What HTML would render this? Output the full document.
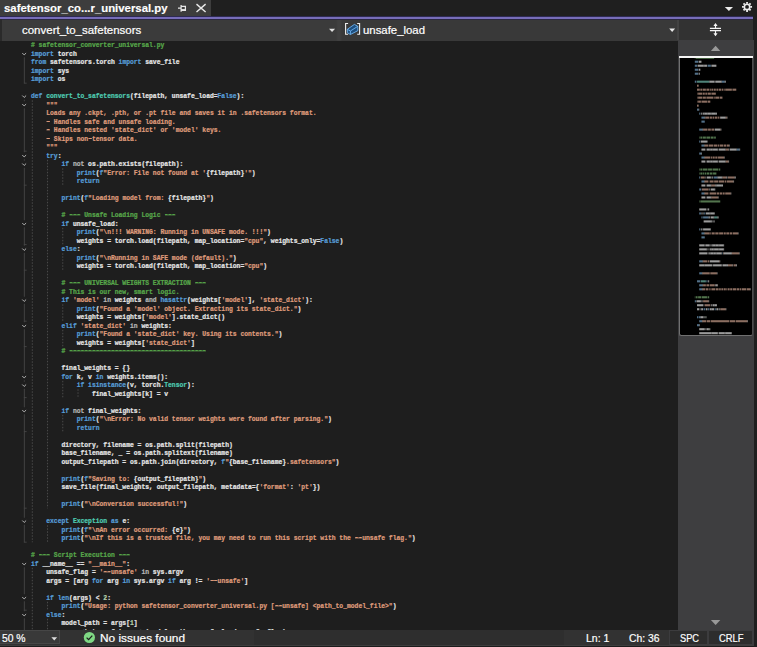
<!DOCTYPE html>
<html lang="en">
<head>
<meta charset="utf-8">
<title>safetensor_converter_universal.py</title>
<style>
html,body{margin:0;padding:0;}
body{width:757px;height:647px;overflow:hidden;background:#1e1e1e;position:relative;font-family:"Liberation Sans",sans-serif;color:#fff;}
.abs{position:absolute;}
.tx{line-height:20px;height:20px;white-space:nowrap;transform-origin:0 0;-webkit-text-stroke:0.2px currentColor;}
#tabs{left:0;top:0;width:757px;height:17px;background:#1f1f1f;}
#tab{left:0;top:0;width:211px;height:17px;background:#3d3d3d;}
#accent{left:0;top:16px;width:753.4px;height:4px;background:linear-gradient(#2e2a52 0,#2e2a52 0.7px,#776db9 0.7px,#776db9 3.1px,#2b2840 3.1px,#2b2840 4px);}
#nav{left:0;top:19.8px;width:753.4px;height:20.9px;background:linear-gradient(90deg,#3b3b3b 0,#3b3b3b 336px,#404040 338px,#404040 340px,#393939 342px,#393939 100%);}
#codeclip{left:0;top:40.8px;width:678px;height:588.9px;overflow:hidden;}
#code{left:31.0px;top:0.00px;font-family:"Liberation Mono",monospace;font-size:12.7px;line-height:17.0px;color:#e4e4e4;white-space:pre;font-weight:bold;-webkit-text-stroke:0.45px currentColor;transform:scale(0.5);transform-origin:0 0;}
.ln{height:17.0px;}
.h{position:relative;top:-1.8px;background:linear-gradient(currentColor,currentColor) no-repeat center 7.3px/calc(100% - 1.2px) 1.7px;}
.c{color:#57a64a;} .k{color:#569cd6;} .s{color:#de9a7a;} .f{color:#4ec9b0;} .t{color:#4ec9b0;} .o{color:#b4b4b4;} .n{color:#b5cea8;}
#editor{left:0;top:40.8px;width:678px;height:589px;overflow:hidden;background:#1e1e1e;}
#vscroll{left:678px;top:39.8px;width:75.8px;height:590.1px;background:#3e3e40;}
#split{left:678.6px;top:19.8px;width:74.8px;height:20px;background:#323232;}
#mini{left:678.5px;top:56.2px;width:74.3px;height:280.2px;background:#000;border-radius:0 0 2.5px 2.5px;border:0.9px solid #707070;border-right:1.4px solid #4c4c4c;border-top:none;box-sizing:border-box;}
#status{left:0;top:629.8px;width:757px;height:17.2px;background:linear-gradient(#323232 0,#323232 15.2px,#3d3d3d 15.2px,#3d3d3d 16.2px,#1c1c1c 16.2px);}
#zoombox{left:0;top:630.3px;width:59.6px;height:14.2px;background:#393939;border:0.8px solid #464646;border-left:none;box-sizing:border-box;}
.box{top:630.9px;height:13.1px;background:#2d2d2d;}
</style>
</head>
<body>
<div id="tabs" class="abs"></div>
<div id="tab" class="abs"></div>
<div class="abs tx" style="left:4.0px;top:-2.02px;font-size:11.3px;font-weight:bold;color:#ffffff;transform:scaleX(1.0055);-webkit-text-stroke:0.15px #fff;">safetensor_co...r_universal.py</div>
<svg class="abs" style="left:170px;top:0" width="50" height="17" viewBox="0 0 50 17">
  <g fill="none" stroke="#e8e8e8" stroke-width="1">
    <path d="M8 8.2 H11 M11.1 5 V11.8 M11 6.3 H15.4 V10.4 H11" stroke-width="1.25"/>
    <path d="M11 10 H15.4" stroke-width="1.8"/>
    <path d="M26.5 4.1 L35.6 12 M35.6 4.1 L26.5 12" stroke-width="1.4"/>
  </g>
</svg>
<svg class="abs" style="left:720px;top:0" width="37" height="17" viewBox="0 0 37 17">
  <path d="M4.8 7 H13 L8.9 11.1 Z" fill="#ececec"/>
  <g transform="translate(27.05 6.9)">
    <circle r="2.7" fill="none" stroke="#ececec" stroke-width="1.6"/>
    <g stroke="#ececec" stroke-width="1.8">
      <path d="M0 -5V-3.2M0 5V3.2M-5 0H-3.2M5 0H3.2M-3.55 -3.55L-2.3 -2.3M3.55 3.55L2.3 2.3M-3.55 3.55L-2.3 2.3M3.55 -3.55L2.3 -2.3"/>
    </g>
  </g>
</svg>
<div id="accent" class="abs"></div>
<div id="nav" class="abs"></div>
<div class="abs" style="left:0;top:19.4px;width:1.5px;height:21.4px;background:#2a2a2a"></div>
<div class="abs" style="left:677.2px;top:19.8px;width:1.6px;height:20.6px;background:#424242"></div>
<div class="abs tx" style="left:21.6px;top:19.85px;font-size:11.4px;font-weight:normal;color:#ffffff;transform:scaleX(1.0076);">convert_to_safetensors</div>
<div class="abs tx" style="left:362.9px;top:19.9px;font-size:11.4px;font-weight:normal;color:#ffffff;transform:scaleX(0.9984);">unsafe_load</div>
<svg class="abs" style="left:326px;top:19.4px" width="12" height="21" viewBox="0 0 12 21"><path d="M3 9.8 H9.1 L6.05 13 Z" fill="#e0e0e0"/></svg>
<svg class="abs" style="left:665px;top:19.4px" width="12" height="21" viewBox="0 0 12 21"><path d="M4.2 9.6 H10.1 L7.15 12.9 Z" fill="#e8e8e8"/></svg>
<svg class="abs" style="left:340px;top:19px" width="26" height="22" viewBox="340 19 26 22">
  <g fill="none" stroke="#f0f0f0" stroke-width="1.1"><path d="M348.1 23.5 H345.6 V34.3 H348.1"/><path d="M357.2 23.5 H359.6 V34.3 H357.2"/></g>
  <path d="M347.3 29.3 L354.4 24.4 L357.8 26.3 V30.7 L350.4 34.5 L347.4 32.7 Z" fill="#1d4f80"/>
  <g fill="none" stroke="#6db3f0" stroke-width="0.9" stroke-linejoin="round"><path d="M347.3 29.3 L354.4 24.4 L357.8 26.3 V30.7 L350.4 34.5 L347.4 32.7 Z"/><path d="M347.3 29.3 L350.4 31 L357.8 26.3 M350.4 31 V34.5"/></g>
</svg>
<div id="split" class="abs"></div>
<svg class="abs" style="left:705px;top:19px" width="22" height="22" viewBox="705 19 22 22">
  <g fill="none" stroke="#f4f4f4" stroke-width="1.15"><path d="M709.9 28.35 H721 M709.9 30.6 H721 M715.5 24 V28 M715.5 31 V35.3"/></g>
  <path d="M713.4 26 L715.5 23.1 L717.6 26 Z M713.4 33.3 L715.5 36.2 L717.6 33.3 Z" fill="#f4f4f4"/>
</svg>

<div id="editor" class="abs"></div>
<svg class="abs" style="left:0;top:0" width="678" height="630" viewBox="0 0 678 630">
<rect x="23.85" y="53.55" width="0.9" height="29.75" fill="#474747"/>
<rect x="23.85" y="96.05" width="0.9" height="446.25" fill="#474747"/>
<rect x="23.85" y="563.55" width="0.9" height="80.75" fill="#474747"/>
<rect x="23.85" y="82.70" width="2.8" height="0.9" fill="#474747"/>
<rect x="23.85" y="150.70" width="2.8" height="0.9" fill="#474747"/>
<rect x="23.85" y="184.70" width="2.8" height="0.9" fill="#474747"/>
<rect x="23.85" y="244.20" width="2.8" height="0.9" fill="#474747"/>
<rect x="23.85" y="269.70" width="2.8" height="0.9" fill="#474747"/>
<rect x="23.85" y="320.70" width="2.8" height="0.9" fill="#474747"/>
<rect x="23.85" y="346.20" width="2.8" height="0.9" fill="#474747"/>
<rect x="23.85" y="397.20" width="2.8" height="0.9" fill="#474747"/>
<rect x="23.85" y="431.20" width="2.8" height="0.9" fill="#474747"/>
<rect x="23.85" y="507.70" width="2.8" height="0.9" fill="#474747"/>
<rect x="23.85" y="541.70" width="2.8" height="0.9" fill="#474747"/>
<rect x="23.85" y="609.70" width="2.8" height="0.9" fill="#474747"/>
<rect x="20.70" y="50.25" width="7" height="7" fill="#1e1e1e"/>
<path d="M22.30 53.05 L24.20 54.95 L26.10 53.05" fill="none" stroke="#c4c4c4" stroke-width="0.9"/>
<rect x="20.70" y="92.75" width="7" height="7" fill="#1e1e1e"/>
<path d="M22.30 95.55 L24.20 97.45 L26.10 95.55" fill="none" stroke="#c4c4c4" stroke-width="0.9"/>
<rect x="20.70" y="101.25" width="7" height="7" fill="#1e1e1e"/>
<path d="M22.30 104.05 L24.20 105.95 L26.10 104.05" fill="none" stroke="#c4c4c4" stroke-width="0.9"/>
<rect x="20.70" y="152.25" width="7" height="7" fill="#1e1e1e"/>
<path d="M22.30 155.05 L24.20 156.95 L26.10 155.05" fill="none" stroke="#c4c4c4" stroke-width="0.9"/>
<rect x="20.70" y="160.75" width="7" height="7" fill="#1e1e1e"/>
<path d="M22.30 163.55 L24.20 165.45 L26.10 163.55" fill="none" stroke="#c4c4c4" stroke-width="0.9"/>
<rect x="20.70" y="220.25" width="7" height="7" fill="#1e1e1e"/>
<path d="M22.30 223.05 L24.20 224.95 L26.10 223.05" fill="none" stroke="#c4c4c4" stroke-width="0.9"/>
<rect x="20.70" y="245.75" width="7" height="7" fill="#1e1e1e"/>
<path d="M22.30 248.55 L24.20 250.45 L26.10 248.55" fill="none" stroke="#c4c4c4" stroke-width="0.9"/>
<rect x="20.70" y="296.75" width="7" height="7" fill="#1e1e1e"/>
<path d="M22.30 299.55 L24.20 301.45 L26.10 299.55" fill="none" stroke="#c4c4c4" stroke-width="0.9"/>
<rect x="20.70" y="322.25" width="7" height="7" fill="#1e1e1e"/>
<path d="M22.30 325.05 L24.20 326.95 L26.10 325.05" fill="none" stroke="#c4c4c4" stroke-width="0.9"/>
<rect x="20.70" y="373.25" width="7" height="7" fill="#1e1e1e"/>
<path d="M22.30 376.05 L24.20 377.95 L26.10 376.05" fill="none" stroke="#c4c4c4" stroke-width="0.9"/>
<rect x="20.70" y="381.75" width="7" height="7" fill="#1e1e1e"/>
<path d="M22.30 384.55 L24.20 386.45 L26.10 384.55" fill="none" stroke="#c4c4c4" stroke-width="0.9"/>
<rect x="20.70" y="407.25" width="7" height="7" fill="#1e1e1e"/>
<path d="M22.30 410.05 L24.20 411.95 L26.10 410.05" fill="none" stroke="#c4c4c4" stroke-width="0.9"/>
<rect x="20.70" y="517.75" width="7" height="7" fill="#1e1e1e"/>
<path d="M22.30 520.55 L24.20 522.45 L26.10 520.55" fill="none" stroke="#c4c4c4" stroke-width="0.9"/>
<rect x="20.70" y="560.25" width="7" height="7" fill="#1e1e1e"/>
<path d="M22.30 563.05 L24.20 564.95 L26.10 563.05" fill="none" stroke="#c4c4c4" stroke-width="0.9"/>
<rect x="20.70" y="594.25" width="7" height="7" fill="#1e1e1e"/>
<path d="M22.30 597.05 L24.20 598.95 L26.10 597.05" fill="none" stroke="#c4c4c4" stroke-width="0.9"/>
<rect x="20.70" y="611.25" width="7" height="7" fill="#1e1e1e"/>
<path d="M22.30 614.05 L24.20 615.95 L26.10 614.05" fill="none" stroke="#c4c4c4" stroke-width="0.9"/>
<line x1="32.30" y1="100.30" x2="32.30" y2="542.30" stroke="#4a4a4a" stroke-width="1" stroke-dasharray="1.5 1.5"/>
<line x1="47.54" y1="159.80" x2="47.54" y2="508.30" stroke="#4a4a4a" stroke-width="1" stroke-dasharray="1.5 1.5"/>
<line x1="62.78" y1="168.30" x2="62.78" y2="185.30" stroke="#4a4a4a" stroke-width="1" stroke-dasharray="1.5 1.5"/>
<line x1="62.78" y1="227.80" x2="62.78" y2="244.80" stroke="#4a4a4a" stroke-width="1" stroke-dasharray="1.5 1.5"/>
<line x1="62.78" y1="253.30" x2="62.78" y2="270.30" stroke="#4a4a4a" stroke-width="1" stroke-dasharray="1.5 1.5"/>
<line x1="62.78" y1="304.30" x2="62.78" y2="321.30" stroke="#4a4a4a" stroke-width="1" stroke-dasharray="1.5 1.5"/>
<line x1="62.78" y1="329.80" x2="62.78" y2="346.80" stroke="#4a4a4a" stroke-width="1" stroke-dasharray="1.5 1.5"/>
<line x1="62.78" y1="380.80" x2="62.78" y2="397.80" stroke="#4a4a4a" stroke-width="1" stroke-dasharray="1.5 1.5"/>
<line x1="78.02" y1="389.30" x2="78.02" y2="397.80" stroke="#4a4a4a" stroke-width="1" stroke-dasharray="1.5 1.5"/>
<line x1="62.78" y1="414.80" x2="62.78" y2="431.80" stroke="#4a4a4a" stroke-width="1" stroke-dasharray="1.5 1.5"/>
<line x1="47.54" y1="525.30" x2="47.54" y2="542.30" stroke="#4a4a4a" stroke-width="1" stroke-dasharray="1.5 1.5"/>
<line x1="32.30" y1="567.80" x2="32.30" y2="644.30" stroke="#4a4a4a" stroke-width="1" stroke-dasharray="1.5 1.5"/>
<line x1="47.54" y1="601.80" x2="47.54" y2="610.30" stroke="#4a4a4a" stroke-width="1" stroke-dasharray="1.5 1.5"/>
<line x1="47.54" y1="618.80" x2="47.54" y2="644.30" stroke="#4a4a4a" stroke-width="1" stroke-dasharray="1.5 1.5"/>
</svg>
<div id="codeclip" class="abs"><div id="code" class="abs"><div class="ln"><span class="c"># safetensor_converter_universal.py</span></div><div class="ln"><span class="k">import </span>torch</div><div class="ln"><span class="k">from </span>safetensors.torch <span class="k">import </span>save_file</div><div class="ln"><span class="k">import </span>sys</div><div class="ln"><span class="k">import </span>os</div><div class="ln"> </div><div class="ln"><span class="k">def </span><span class="f">convert_to_safetensors</span>(filepath, unsafe_load=<span class="k">False</span>):</div><div class="ln"><span class="s">    """</span></div><div class="ln"><span class="s">    Loads any .ckpt, .pth, or .pt file and saves it in .safetensors format.</span></div><div class="ln"><span class="s">    <span class="h">-</span> Handles safe and unsafe loading.</span></div><div class="ln"><span class="s">    <span class="h">-</span> Handles nested 'state_dict' or 'model' keys.</span></div><div class="ln"><span class="s">    <span class="h">-</span> Skips non<span class="h">-</span>tensor data.</span></div><div class="ln"><span class="s">    """</span></div><div class="ln"><span class="k">    try</span>:</div><div class="ln"><span class="k">        if </span><span class="o">not </span>os.path.exists(filepath):</div><div class="ln"><span class="k">            print</span>(<span class="k">f</span><span class="s">"Error: File not found at '</span>{filepath}<span class="s">'"</span>)</div><div class="ln"><span class="k">            return</span></div><div class="ln"> </div><div class="ln"><span class="k">        print</span>(<span class="k">f</span><span class="s">"Loading model from: </span>{filepath}<span class="s">"</span>)</div><div class="ln"> </div><div class="ln"><span class="c">        # <span class="h">---</span> Unsafe Loading Logic <span class="h">---</span></span></div><div class="ln"><span class="k">        if </span>unsafe_load:</div><div class="ln"><span class="k">            print</span>(<span class="s">"\n!!! WARNING: Running in UNSAFE mode. !!!"</span>)</div><div class="ln">            weights = torch.load(filepath, map_location=<span class="s">"cpu"</span>, weights_only=<span class="k">False</span>)</div><div class="ln"><span class="k">        else</span>:</div><div class="ln"><span class="k">            print</span>(<span class="s">"\nRunning in SAFE mode (default)."</span>)</div><div class="ln">            weights = torch.load(filepath, map_location=<span class="s">"cpu"</span>)</div><div class="ln"> </div><div class="ln"><span class="c">        # <span class="h">---</span> UNIVERSAL WEIGHTS EXTRACTION <span class="h">---</span></span></div><div class="ln"><span class="c">        # This is our new, smart logic.</span></div><div class="ln"><span class="k">        if </span><span class="s">'model' </span><span class="o">in </span>weights <span class="o">and </span><span class="k">hasattr</span>(weights[<span class="s">'model'</span>], <span class="s">'state_dict'</span>):</div><div class="ln"><span class="k">            print</span>(<span class="s">"Found a 'model' object. Extracting its state_dict."</span>)</div><div class="ln">            weights = weights[<span class="s">'model'</span>].state_dict()</div><div class="ln"><span class="k">        elif </span><span class="s">'state_dict' </span><span class="o">in </span>weights:</div><div class="ln"><span class="k">            print</span>(<span class="s">"Found a 'state_dict' key. Using its contents."</span>)</div><div class="ln">            weights = weights[<span class="s">'state_dict'</span>]</div><div class="ln"><span class="c">        # <span class="h">------------------------------------</span></span></div><div class="ln"> </div><div class="ln">        final_weights = {}</div><div class="ln"><span class="k">        for </span>k, v <span class="k">in </span>weights.items():</div><div class="ln"><span class="k">            if isinstance</span>(v, torch.<span class="t">Tensor</span>):</div><div class="ln">                final_weights[k] = v</div><div class="ln"> </div><div class="ln"><span class="k">        if </span><span class="o">not </span>final_weights:</div><div class="ln"><span class="k">            print</span>(<span class="s">"\nError: No valid tensor weights were found after parsing."</span>)</div><div class="ln"><span class="k">            return</span></div><div class="ln"> </div><div class="ln">        directory, filename = os.path.split(filepath)</div><div class="ln">        base_filename, _ = os.path.splitext(filename)</div><div class="ln">        output_filepath = os.path.join(directory, <span class="k">f</span><span class="s">"</span>{base_filename}<span class="s">.safetensors"</span>)</div><div class="ln"> </div><div class="ln"><span class="k">        print</span>(<span class="k">f</span><span class="s">"Saving to: </span>{output_filepath}<span class="s">"</span>)</div><div class="ln">        save_file(final_weights, output_filepath, metadata={<span class="s">'format'</span>: <span class="s">'pt'</span>})</div><div class="ln"> </div><div class="ln"><span class="k">        print</span>(<span class="s">"\nConversion successful!"</span>)</div><div class="ln"> </div><div class="ln"><span class="k">    except </span><span class="t">Exception </span><span class="k">as </span>e:</div><div class="ln"><span class="k">        print</span>(<span class="k">f</span><span class="s">"\nAn error occurred: </span>{e}<span class="s">"</span>)</div><div class="ln"><span class="k">        print</span>(<span class="s">"\nIf this is a trusted file, you may need to run this script with the <span class="h">--</span>unsafe flag."</span>)</div><div class="ln"> </div><div class="ln"><span class="c"># <span class="h">---</span> Script Execution <span class="h">---</span></span></div><div class="ln"><span class="k">if </span>__name__ == <span class="s">"__main__"</span>:</div><div class="ln">    unsafe_flag = <span class="s">'<span class="h">--</span>unsafe' </span><span class="o">in </span>sys.argv</div><div class="ln">    args = [arg <span class="k">for </span>arg <span class="k">in </span>sys.argv <span class="k">if </span>arg != <span class="s">'<span class="h">--</span>unsafe'</span>]</div><div class="ln"> </div><div class="ln"><span class="k">    if len</span>(args) &lt; <span class="n">2</span>:</div><div class="ln"><span class="k">        print</span>(<span class="s">"Usage: python safetensor_converter_universal.py [<span class="h">--</span>unsafe] &lt;path_to_model_file&gt;"</span>)</div><div class="ln"><span class="k">    else</span>:</div><div class="ln">        model_path = args[<span class="n">1</span>]</div><div class="ln">        convert_to_safetensors(model_path, unsafe_load=unsafe_flag)</div></div></div>

<div id="vscroll" class="abs"></div>
<svg class="abs" style="left:678px;top:40px" width="76" height="590" viewBox="0 0 76 590">
  <path d="M32.9 11 L37.6 5.7 L42.3 11 Z" fill="#999"/>
  <path d="M32.9 580 L37.6 585.1 L42.3 580 Z" fill="#999"/>
</svg>
<div id="mini" class="abs"></div>
<svg class="abs" style="left:0;top:0" width="757" height="647" viewBox="0 0 757 647">
<rect x="694.80" y="56.70" width="0.55" height="2.1" fill="#89c180" opacity="0.6"/>
<rect x="695.91" y="56.70" width="18.25" height="2.1" fill="#89c180" opacity="0.6"/>
<rect x="694.80" y="60.69" width="3.32" height="2.1" fill="#89bae2" opacity="0.6"/>
<rect x="698.67" y="60.69" width="2.77" height="2.1" fill="#ececec" opacity="0.66"/>
<rect x="694.80" y="64.68" width="2.21" height="2.1" fill="#89bae2" opacity="0.6"/>
<rect x="697.56" y="64.68" width="6.08" height="2.1" fill="#ececec" opacity="0.66"/>
<rect x="703.65" y="64.68" width="0.55" height="2.1" fill="#ececec" opacity="0.66"/>
<rect x="704.20" y="64.68" width="2.77" height="2.1" fill="#ececec" opacity="0.66"/>
<rect x="707.52" y="64.68" width="3.32" height="2.1" fill="#89bae2" opacity="0.6"/>
<rect x="711.39" y="64.68" width="4.98" height="2.1" fill="#ececec" opacity="0.66"/>
<rect x="694.80" y="68.68" width="3.32" height="2.1" fill="#89bae2" opacity="0.6"/>
<rect x="698.67" y="68.68" width="1.66" height="2.1" fill="#ececec" opacity="0.66"/>
<rect x="694.80" y="72.67" width="3.32" height="2.1" fill="#89bae2" opacity="0.6"/>
<rect x="698.67" y="72.67" width="1.11" height="2.1" fill="#ececec" opacity="0.66"/>
<rect x="694.80" y="80.65" width="1.66" height="2.1" fill="#89bae2" opacity="0.6"/>
<rect x="697.01" y="80.65" width="12.17" height="2.1" fill="#83d9c8" opacity="0.6"/>
<rect x="709.18" y="80.65" width="0.55" height="2.1" fill="#ececec" opacity="0.66"/>
<rect x="709.73" y="80.65" width="4.42" height="2.1" fill="#ececec" opacity="0.66"/>
<rect x="714.15" y="80.65" width="0.55" height="2.1" fill="#ececec" opacity="0.66"/>
<rect x="715.26" y="80.65" width="6.08" height="2.1" fill="#ececec" opacity="0.66"/>
<rect x="721.34" y="80.65" width="0.55" height="2.1" fill="#ececec" opacity="0.66"/>
<rect x="721.90" y="80.65" width="2.77" height="2.1" fill="#89bae2" opacity="0.6"/>
<rect x="724.66" y="80.65" width="1.11" height="2.1" fill="#ececec" opacity="0.66"/>
<rect x="697.01" y="84.64" width="1.66" height="2.1" fill="#e8b8a2" opacity="0.6"/>
<rect x="697.01" y="88.64" width="2.77" height="2.1" fill="#e8b8a2" opacity="0.6"/>
<rect x="700.33" y="88.64" width="1.66" height="2.1" fill="#e8b8a2" opacity="0.6"/>
<rect x="702.54" y="88.64" width="3.32" height="2.1" fill="#e8b8a2" opacity="0.6"/>
<rect x="706.41" y="88.64" width="2.77" height="2.1" fill="#e8b8a2" opacity="0.6"/>
<rect x="709.73" y="88.64" width="1.11" height="2.1" fill="#e8b8a2" opacity="0.6"/>
<rect x="711.39" y="88.64" width="1.66" height="2.1" fill="#e8b8a2" opacity="0.6"/>
<rect x="713.60" y="88.64" width="2.21" height="2.1" fill="#e8b8a2" opacity="0.6"/>
<rect x="716.37" y="88.64" width="1.66" height="2.1" fill="#e8b8a2" opacity="0.6"/>
<rect x="718.58" y="88.64" width="2.77" height="2.1" fill="#e8b8a2" opacity="0.6"/>
<rect x="721.90" y="88.64" width="1.11" height="2.1" fill="#e8b8a2" opacity="0.6"/>
<rect x="723.56" y="88.64" width="1.11" height="2.1" fill="#e8b8a2" opacity="0.6"/>
<rect x="725.21" y="88.64" width="6.64" height="2.1" fill="#e8b8a2" opacity="0.6"/>
<rect x="732.40" y="88.64" width="3.87" height="2.1" fill="#e8b8a2" opacity="0.6"/>
<rect x="697.01" y="92.63" width="0.55" height="2.1" fill="#e8b8a2" opacity="0.6"/>
<rect x="698.12" y="92.63" width="3.87" height="2.1" fill="#e8b8a2" opacity="0.6"/>
<rect x="702.54" y="92.63" width="2.21" height="2.1" fill="#e8b8a2" opacity="0.6"/>
<rect x="705.31" y="92.63" width="1.66" height="2.1" fill="#e8b8a2" opacity="0.6"/>
<rect x="707.52" y="92.63" width="3.32" height="2.1" fill="#e8b8a2" opacity="0.6"/>
<rect x="711.39" y="92.63" width="4.42" height="2.1" fill="#e8b8a2" opacity="0.6"/>
<rect x="697.01" y="96.62" width="0.55" height="2.1" fill="#e8b8a2" opacity="0.6"/>
<rect x="698.12" y="96.62" width="3.87" height="2.1" fill="#e8b8a2" opacity="0.6"/>
<rect x="702.54" y="96.62" width="3.32" height="2.1" fill="#e8b8a2" opacity="0.6"/>
<rect x="706.41" y="96.62" width="6.64" height="2.1" fill="#e8b8a2" opacity="0.6"/>
<rect x="713.60" y="96.62" width="1.11" height="2.1" fill="#e8b8a2" opacity="0.6"/>
<rect x="715.26" y="96.62" width="3.87" height="2.1" fill="#e8b8a2" opacity="0.6"/>
<rect x="719.68" y="96.62" width="2.77" height="2.1" fill="#e8b8a2" opacity="0.6"/>
<rect x="697.01" y="100.61" width="0.55" height="2.1" fill="#e8b8a2" opacity="0.6"/>
<rect x="698.12" y="100.61" width="2.77" height="2.1" fill="#e8b8a2" opacity="0.6"/>
<rect x="701.44" y="100.61" width="5.53" height="2.1" fill="#e8b8a2" opacity="0.6"/>
<rect x="707.52" y="100.61" width="2.77" height="2.1" fill="#e8b8a2" opacity="0.6"/>
<rect x="697.01" y="104.60" width="1.66" height="2.1" fill="#e8b8a2" opacity="0.6"/>
<rect x="697.01" y="108.60" width="1.66" height="2.1" fill="#89bae2" opacity="0.6"/>
<rect x="698.67" y="108.60" width="0.55" height="2.1" fill="#ececec" opacity="0.66"/>
<rect x="699.22" y="112.59" width="1.11" height="2.1" fill="#89bae2" opacity="0.6"/>
<rect x="700.88" y="112.59" width="1.66" height="2.1" fill="#cacaca" opacity="0.6"/>
<rect x="703.09" y="112.59" width="1.11" height="2.1" fill="#ececec" opacity="0.66"/>
<rect x="704.20" y="112.59" width="0.55" height="2.1" fill="#ececec" opacity="0.66"/>
<rect x="704.75" y="112.59" width="2.21" height="2.1" fill="#ececec" opacity="0.66"/>
<rect x="706.97" y="112.59" width="0.55" height="2.1" fill="#ececec" opacity="0.66"/>
<rect x="707.52" y="112.59" width="3.32" height="2.1" fill="#ececec" opacity="0.66"/>
<rect x="710.84" y="112.59" width="0.55" height="2.1" fill="#ececec" opacity="0.66"/>
<rect x="711.39" y="112.59" width="4.42" height="2.1" fill="#ececec" opacity="0.66"/>
<rect x="715.81" y="112.59" width="1.11" height="2.1" fill="#ececec" opacity="0.66"/>
<rect x="701.44" y="116.58" width="2.77" height="2.1" fill="#89bae2" opacity="0.6"/>
<rect x="704.20" y="116.58" width="0.55" height="2.1" fill="#ececec" opacity="0.66"/>
<rect x="704.75" y="116.58" width="0.55" height="2.1" fill="#89bae2" opacity="0.6"/>
<rect x="705.31" y="116.58" width="3.87" height="2.1" fill="#e8b8a2" opacity="0.6"/>
<rect x="709.73" y="116.58" width="2.21" height="2.1" fill="#e8b8a2" opacity="0.6"/>
<rect x="712.50" y="116.58" width="1.66" height="2.1" fill="#e8b8a2" opacity="0.6"/>
<rect x="714.71" y="116.58" width="2.77" height="2.1" fill="#e8b8a2" opacity="0.6"/>
<rect x="718.03" y="116.58" width="1.11" height="2.1" fill="#e8b8a2" opacity="0.6"/>
<rect x="719.68" y="116.58" width="0.55" height="2.1" fill="#e8b8a2" opacity="0.6"/>
<rect x="720.24" y="116.58" width="5.53" height="2.1" fill="#ececec" opacity="0.66"/>
<rect x="725.77" y="116.58" width="1.11" height="2.1" fill="#e8b8a2" opacity="0.6"/>
<rect x="726.87" y="116.58" width="0.55" height="2.1" fill="#ececec" opacity="0.66"/>
<rect x="701.44" y="120.57" width="3.32" height="2.1" fill="#89bae2" opacity="0.6"/>
<rect x="699.22" y="128.56" width="2.77" height="2.1" fill="#89bae2" opacity="0.6"/>
<rect x="701.99" y="128.56" width="0.55" height="2.1" fill="#ececec" opacity="0.66"/>
<rect x="702.54" y="128.56" width="0.55" height="2.1" fill="#89bae2" opacity="0.6"/>
<rect x="703.09" y="128.56" width="4.42" height="2.1" fill="#e8b8a2" opacity="0.6"/>
<rect x="708.07" y="128.56" width="2.77" height="2.1" fill="#e8b8a2" opacity="0.6"/>
<rect x="711.39" y="128.56" width="2.77" height="2.1" fill="#e8b8a2" opacity="0.6"/>
<rect x="714.71" y="128.56" width="5.53" height="2.1" fill="#ececec" opacity="0.66"/>
<rect x="720.24" y="128.56" width="0.55" height="2.1" fill="#e8b8a2" opacity="0.6"/>
<rect x="720.79" y="128.56" width="0.55" height="2.1" fill="#ececec" opacity="0.66"/>
<rect x="699.22" y="136.54" width="0.55" height="2.1" fill="#89c180" opacity="0.6"/>
<rect x="700.33" y="136.54" width="1.66" height="2.1" fill="#89c180" opacity="0.6"/>
<rect x="702.54" y="136.54" width="3.32" height="2.1" fill="#89c180" opacity="0.6"/>
<rect x="706.41" y="136.54" width="3.87" height="2.1" fill="#89c180" opacity="0.6"/>
<rect x="710.84" y="136.54" width="2.77" height="2.1" fill="#89c180" opacity="0.6"/>
<rect x="714.15" y="136.54" width="1.66" height="2.1" fill="#89c180" opacity="0.6"/>
<rect x="699.22" y="140.53" width="1.11" height="2.1" fill="#89bae2" opacity="0.6"/>
<rect x="700.88" y="140.53" width="6.08" height="2.1" fill="#ececec" opacity="0.66"/>
<rect x="706.97" y="140.53" width="0.55" height="2.1" fill="#ececec" opacity="0.66"/>
<rect x="701.44" y="144.52" width="2.77" height="2.1" fill="#89bae2" opacity="0.6"/>
<rect x="704.20" y="144.52" width="0.55" height="2.1" fill="#ececec" opacity="0.66"/>
<rect x="704.75" y="144.52" width="3.32" height="2.1" fill="#e8b8a2" opacity="0.6"/>
<rect x="708.62" y="144.52" width="4.42" height="2.1" fill="#e8b8a2" opacity="0.6"/>
<rect x="713.60" y="144.52" width="3.87" height="2.1" fill="#e8b8a2" opacity="0.6"/>
<rect x="718.03" y="144.52" width="1.11" height="2.1" fill="#e8b8a2" opacity="0.6"/>
<rect x="719.68" y="144.52" width="3.32" height="2.1" fill="#e8b8a2" opacity="0.6"/>
<rect x="723.56" y="144.52" width="2.77" height="2.1" fill="#e8b8a2" opacity="0.6"/>
<rect x="726.87" y="144.52" width="2.21" height="2.1" fill="#e8b8a2" opacity="0.6"/>
<rect x="729.09" y="144.52" width="0.55" height="2.1" fill="#ececec" opacity="0.66"/>
<rect x="701.44" y="148.52" width="3.87" height="2.1" fill="#ececec" opacity="0.66"/>
<rect x="705.86" y="148.52" width="0.55" height="2.1" fill="#ececec" opacity="0.66"/>
<rect x="706.97" y="148.52" width="2.77" height="2.1" fill="#ececec" opacity="0.66"/>
<rect x="709.73" y="148.52" width="0.55" height="2.1" fill="#ececec" opacity="0.66"/>
<rect x="710.28" y="148.52" width="2.21" height="2.1" fill="#ececec" opacity="0.66"/>
<rect x="712.50" y="148.52" width="0.55" height="2.1" fill="#ececec" opacity="0.66"/>
<rect x="713.05" y="148.52" width="4.42" height="2.1" fill="#ececec" opacity="0.66"/>
<rect x="717.47" y="148.52" width="0.55" height="2.1" fill="#ececec" opacity="0.66"/>
<rect x="718.58" y="148.52" width="6.64" height="2.1" fill="#ececec" opacity="0.66"/>
<rect x="725.21" y="148.52" width="0.55" height="2.1" fill="#ececec" opacity="0.66"/>
<rect x="725.77" y="148.52" width="2.77" height="2.1" fill="#e8b8a2" opacity="0.6"/>
<rect x="728.53" y="148.52" width="0.55" height="2.1" fill="#ececec" opacity="0.66"/>
<rect x="729.64" y="148.52" width="6.64" height="2.1" fill="#ececec" opacity="0.66"/>
<rect x="736.27" y="148.52" width="0.55" height="2.1" fill="#ececec" opacity="0.66"/>
<rect x="736.83" y="148.52" width="2.77" height="2.1" fill="#89bae2" opacity="0.6"/>
<rect x="739.59" y="148.52" width="0.55" height="2.1" fill="#ececec" opacity="0.66"/>
<rect x="699.22" y="152.51" width="2.21" height="2.1" fill="#89bae2" opacity="0.6"/>
<rect x="701.44" y="152.51" width="0.55" height="2.1" fill="#ececec" opacity="0.66"/>
<rect x="701.44" y="156.50" width="2.77" height="2.1" fill="#89bae2" opacity="0.6"/>
<rect x="704.20" y="156.50" width="0.55" height="2.1" fill="#ececec" opacity="0.66"/>
<rect x="704.75" y="156.50" width="5.53" height="2.1" fill="#e8b8a2" opacity="0.6"/>
<rect x="710.84" y="156.50" width="1.11" height="2.1" fill="#e8b8a2" opacity="0.6"/>
<rect x="712.50" y="156.50" width="2.21" height="2.1" fill="#e8b8a2" opacity="0.6"/>
<rect x="715.26" y="156.50" width="2.21" height="2.1" fill="#e8b8a2" opacity="0.6"/>
<rect x="718.03" y="156.50" width="6.08" height="2.1" fill="#e8b8a2" opacity="0.6"/>
<rect x="724.11" y="156.50" width="0.55" height="2.1" fill="#ececec" opacity="0.66"/>
<rect x="701.44" y="160.49" width="3.87" height="2.1" fill="#ececec" opacity="0.66"/>
<rect x="705.86" y="160.49" width="0.55" height="2.1" fill="#ececec" opacity="0.66"/>
<rect x="706.97" y="160.49" width="2.77" height="2.1" fill="#ececec" opacity="0.66"/>
<rect x="709.73" y="160.49" width="0.55" height="2.1" fill="#ececec" opacity="0.66"/>
<rect x="710.28" y="160.49" width="2.21" height="2.1" fill="#ececec" opacity="0.66"/>
<rect x="712.50" y="160.49" width="0.55" height="2.1" fill="#ececec" opacity="0.66"/>
<rect x="713.05" y="160.49" width="4.42" height="2.1" fill="#ececec" opacity="0.66"/>
<rect x="717.47" y="160.49" width="0.55" height="2.1" fill="#ececec" opacity="0.66"/>
<rect x="718.58" y="160.49" width="6.64" height="2.1" fill="#ececec" opacity="0.66"/>
<rect x="725.21" y="160.49" width="0.55" height="2.1" fill="#ececec" opacity="0.66"/>
<rect x="725.77" y="160.49" width="2.77" height="2.1" fill="#e8b8a2" opacity="0.6"/>
<rect x="728.53" y="160.49" width="0.55" height="2.1" fill="#ececec" opacity="0.66"/>
<rect x="699.22" y="168.48" width="0.55" height="2.1" fill="#89c180" opacity="0.6"/>
<rect x="700.33" y="168.48" width="1.66" height="2.1" fill="#89c180" opacity="0.6"/>
<rect x="702.54" y="168.48" width="4.98" height="2.1" fill="#89c180" opacity="0.6"/>
<rect x="708.07" y="168.48" width="3.87" height="2.1" fill="#89c180" opacity="0.6"/>
<rect x="712.50" y="168.48" width="5.53" height="2.1" fill="#89c180" opacity="0.6"/>
<rect x="718.58" y="168.48" width="1.66" height="2.1" fill="#89c180" opacity="0.6"/>
<rect x="699.22" y="172.47" width="0.55" height="2.1" fill="#89c180" opacity="0.6"/>
<rect x="700.33" y="172.47" width="2.21" height="2.1" fill="#89c180" opacity="0.6"/>
<rect x="703.09" y="172.47" width="1.11" height="2.1" fill="#89c180" opacity="0.6"/>
<rect x="704.75" y="172.47" width="1.66" height="2.1" fill="#89c180" opacity="0.6"/>
<rect x="706.97" y="172.47" width="2.21" height="2.1" fill="#89c180" opacity="0.6"/>
<rect x="709.73" y="172.47" width="2.77" height="2.1" fill="#89c180" opacity="0.6"/>
<rect x="713.05" y="172.47" width="3.32" height="2.1" fill="#89c180" opacity="0.6"/>
<rect x="699.22" y="176.46" width="1.11" height="2.1" fill="#89bae2" opacity="0.6"/>
<rect x="700.88" y="176.46" width="3.87" height="2.1" fill="#e8b8a2" opacity="0.6"/>
<rect x="705.31" y="176.46" width="1.11" height="2.1" fill="#cacaca" opacity="0.6"/>
<rect x="706.97" y="176.46" width="3.87" height="2.1" fill="#ececec" opacity="0.66"/>
<rect x="711.39" y="176.46" width="1.66" height="2.1" fill="#cacaca" opacity="0.6"/>
<rect x="713.60" y="176.46" width="3.87" height="2.1" fill="#89bae2" opacity="0.6"/>
<rect x="717.47" y="176.46" width="0.55" height="2.1" fill="#ececec" opacity="0.66"/>
<rect x="718.03" y="176.46" width="3.87" height="2.1" fill="#ececec" opacity="0.66"/>
<rect x="721.90" y="176.46" width="0.55" height="2.1" fill="#ececec" opacity="0.66"/>
<rect x="722.45" y="176.46" width="3.87" height="2.1" fill="#e8b8a2" opacity="0.6"/>
<rect x="726.32" y="176.46" width="1.11" height="2.1" fill="#ececec" opacity="0.66"/>
<rect x="727.98" y="176.46" width="6.64" height="2.1" fill="#e8b8a2" opacity="0.6"/>
<rect x="734.62" y="176.46" width="1.11" height="2.1" fill="#ececec" opacity="0.66"/>
<rect x="701.44" y="180.45" width="2.77" height="2.1" fill="#89bae2" opacity="0.6"/>
<rect x="704.20" y="180.45" width="0.55" height="2.1" fill="#ececec" opacity="0.66"/>
<rect x="704.75" y="180.45" width="3.32" height="2.1" fill="#e8b8a2" opacity="0.6"/>
<rect x="708.62" y="180.45" width="0.55" height="2.1" fill="#e8b8a2" opacity="0.6"/>
<rect x="709.73" y="180.45" width="3.87" height="2.1" fill="#e8b8a2" opacity="0.6"/>
<rect x="714.15" y="180.45" width="3.87" height="2.1" fill="#e8b8a2" opacity="0.6"/>
<rect x="718.58" y="180.45" width="5.53" height="2.1" fill="#e8b8a2" opacity="0.6"/>
<rect x="724.66" y="180.45" width="1.66" height="2.1" fill="#e8b8a2" opacity="0.6"/>
<rect x="726.87" y="180.45" width="6.64" height="2.1" fill="#e8b8a2" opacity="0.6"/>
<rect x="733.51" y="180.45" width="0.55" height="2.1" fill="#ececec" opacity="0.66"/>
<rect x="701.44" y="184.44" width="3.87" height="2.1" fill="#ececec" opacity="0.66"/>
<rect x="705.86" y="184.44" width="0.55" height="2.1" fill="#ececec" opacity="0.66"/>
<rect x="706.97" y="184.44" width="3.87" height="2.1" fill="#ececec" opacity="0.66"/>
<rect x="710.84" y="184.44" width="0.55" height="2.1" fill="#ececec" opacity="0.66"/>
<rect x="711.39" y="184.44" width="3.87" height="2.1" fill="#e8b8a2" opacity="0.6"/>
<rect x="715.26" y="184.44" width="1.11" height="2.1" fill="#ececec" opacity="0.66"/>
<rect x="716.37" y="184.44" width="5.53" height="2.1" fill="#ececec" opacity="0.66"/>
<rect x="721.90" y="184.44" width="1.11" height="2.1" fill="#ececec" opacity="0.66"/>
<rect x="699.22" y="188.44" width="2.21" height="2.1" fill="#89bae2" opacity="0.6"/>
<rect x="701.99" y="188.44" width="6.64" height="2.1" fill="#e8b8a2" opacity="0.6"/>
<rect x="709.18" y="188.44" width="1.11" height="2.1" fill="#cacaca" opacity="0.6"/>
<rect x="710.84" y="188.44" width="3.87" height="2.1" fill="#ececec" opacity="0.66"/>
<rect x="714.71" y="188.44" width="0.55" height="2.1" fill="#ececec" opacity="0.66"/>
<rect x="701.44" y="192.43" width="2.77" height="2.1" fill="#89bae2" opacity="0.6"/>
<rect x="704.20" y="192.43" width="0.55" height="2.1" fill="#ececec" opacity="0.66"/>
<rect x="704.75" y="192.43" width="3.32" height="2.1" fill="#e8b8a2" opacity="0.6"/>
<rect x="708.62" y="192.43" width="0.55" height="2.1" fill="#e8b8a2" opacity="0.6"/>
<rect x="709.73" y="192.43" width="6.64" height="2.1" fill="#e8b8a2" opacity="0.6"/>
<rect x="716.92" y="192.43" width="2.21" height="2.1" fill="#e8b8a2" opacity="0.6"/>
<rect x="719.68" y="192.43" width="2.77" height="2.1" fill="#e8b8a2" opacity="0.6"/>
<rect x="723.00" y="192.43" width="1.66" height="2.1" fill="#e8b8a2" opacity="0.6"/>
<rect x="725.21" y="192.43" width="5.53" height="2.1" fill="#e8b8a2" opacity="0.6"/>
<rect x="730.75" y="192.43" width="0.55" height="2.1" fill="#ececec" opacity="0.66"/>
<rect x="701.44" y="196.42" width="3.87" height="2.1" fill="#ececec" opacity="0.66"/>
<rect x="705.86" y="196.42" width="0.55" height="2.1" fill="#ececec" opacity="0.66"/>
<rect x="706.97" y="196.42" width="3.87" height="2.1" fill="#ececec" opacity="0.66"/>
<rect x="710.84" y="196.42" width="0.55" height="2.1" fill="#ececec" opacity="0.66"/>
<rect x="711.39" y="196.42" width="6.64" height="2.1" fill="#e8b8a2" opacity="0.6"/>
<rect x="718.03" y="196.42" width="0.55" height="2.1" fill="#ececec" opacity="0.66"/>
<rect x="699.22" y="200.41" width="0.55" height="2.1" fill="#89c180" opacity="0.6"/>
<rect x="700.33" y="200.41" width="19.91" height="2.1" fill="#89c180" opacity="0.6"/>
<rect x="699.22" y="208.40" width="7.19" height="2.1" fill="#ececec" opacity="0.66"/>
<rect x="706.97" y="208.40" width="0.55" height="2.1" fill="#ececec" opacity="0.66"/>
<rect x="708.07" y="208.40" width="1.11" height="2.1" fill="#ececec" opacity="0.66"/>
<rect x="699.22" y="212.39" width="1.66" height="2.1" fill="#89bae2" opacity="0.6"/>
<rect x="701.44" y="212.39" width="0.55" height="2.1" fill="#ececec" opacity="0.66"/>
<rect x="701.99" y="212.39" width="0.55" height="2.1" fill="#ececec" opacity="0.66"/>
<rect x="703.09" y="212.39" width="0.55" height="2.1" fill="#ececec" opacity="0.66"/>
<rect x="704.20" y="212.39" width="1.11" height="2.1" fill="#89bae2" opacity="0.6"/>
<rect x="705.86" y="212.39" width="3.87" height="2.1" fill="#ececec" opacity="0.66"/>
<rect x="709.73" y="212.39" width="0.55" height="2.1" fill="#ececec" opacity="0.66"/>
<rect x="710.28" y="212.39" width="2.77" height="2.1" fill="#ececec" opacity="0.66"/>
<rect x="713.05" y="212.39" width="1.66" height="2.1" fill="#ececec" opacity="0.66"/>
<rect x="701.44" y="216.38" width="1.11" height="2.1" fill="#89bae2" opacity="0.6"/>
<rect x="703.09" y="216.38" width="5.53" height="2.1" fill="#89bae2" opacity="0.6"/>
<rect x="708.62" y="216.38" width="0.55" height="2.1" fill="#ececec" opacity="0.66"/>
<rect x="709.18" y="216.38" width="0.55" height="2.1" fill="#ececec" opacity="0.66"/>
<rect x="709.73" y="216.38" width="0.55" height="2.1" fill="#ececec" opacity="0.66"/>
<rect x="710.84" y="216.38" width="2.77" height="2.1" fill="#ececec" opacity="0.66"/>
<rect x="713.60" y="216.38" width="0.55" height="2.1" fill="#ececec" opacity="0.66"/>
<rect x="714.15" y="216.38" width="3.32" height="2.1" fill="#83d9c8" opacity="0.6"/>
<rect x="717.47" y="216.38" width="1.11" height="2.1" fill="#ececec" opacity="0.66"/>
<rect x="703.65" y="220.37" width="7.19" height="2.1" fill="#ececec" opacity="0.66"/>
<rect x="710.84" y="220.37" width="0.55" height="2.1" fill="#ececec" opacity="0.66"/>
<rect x="711.39" y="220.37" width="0.55" height="2.1" fill="#ececec" opacity="0.66"/>
<rect x="711.94" y="220.37" width="0.55" height="2.1" fill="#ececec" opacity="0.66"/>
<rect x="713.05" y="220.37" width="0.55" height="2.1" fill="#ececec" opacity="0.66"/>
<rect x="714.15" y="220.37" width="0.55" height="2.1" fill="#ececec" opacity="0.66"/>
<rect x="699.22" y="228.36" width="1.11" height="2.1" fill="#89bae2" opacity="0.6"/>
<rect x="700.88" y="228.36" width="1.66" height="2.1" fill="#cacaca" opacity="0.6"/>
<rect x="703.09" y="228.36" width="7.19" height="2.1" fill="#ececec" opacity="0.66"/>
<rect x="710.28" y="228.36" width="0.55" height="2.1" fill="#ececec" opacity="0.66"/>
<rect x="701.44" y="232.35" width="2.77" height="2.1" fill="#89bae2" opacity="0.6"/>
<rect x="704.20" y="232.35" width="0.55" height="2.1" fill="#ececec" opacity="0.66"/>
<rect x="704.75" y="232.35" width="4.98" height="2.1" fill="#e8b8a2" opacity="0.6"/>
<rect x="710.28" y="232.35" width="1.11" height="2.1" fill="#e8b8a2" opacity="0.6"/>
<rect x="711.94" y="232.35" width="2.77" height="2.1" fill="#e8b8a2" opacity="0.6"/>
<rect x="715.26" y="232.35" width="3.32" height="2.1" fill="#e8b8a2" opacity="0.6"/>
<rect x="719.13" y="232.35" width="3.87" height="2.1" fill="#e8b8a2" opacity="0.6"/>
<rect x="723.56" y="232.35" width="2.21" height="2.1" fill="#e8b8a2" opacity="0.6"/>
<rect x="726.32" y="232.35" width="2.77" height="2.1" fill="#e8b8a2" opacity="0.6"/>
<rect x="729.64" y="232.35" width="2.77" height="2.1" fill="#e8b8a2" opacity="0.6"/>
<rect x="732.96" y="232.35" width="4.98" height="2.1" fill="#e8b8a2" opacity="0.6"/>
<rect x="737.93" y="232.35" width="0.55" height="2.1" fill="#ececec" opacity="0.66"/>
<rect x="701.44" y="236.34" width="3.32" height="2.1" fill="#89bae2" opacity="0.6"/>
<rect x="699.22" y="244.32" width="4.98" height="2.1" fill="#ececec" opacity="0.66"/>
<rect x="704.20" y="244.32" width="0.55" height="2.1" fill="#ececec" opacity="0.66"/>
<rect x="705.31" y="244.32" width="4.42" height="2.1" fill="#ececec" opacity="0.66"/>
<rect x="710.28" y="244.32" width="0.55" height="2.1" fill="#ececec" opacity="0.66"/>
<rect x="711.39" y="244.32" width="1.11" height="2.1" fill="#ececec" opacity="0.66"/>
<rect x="712.50" y="244.32" width="0.55" height="2.1" fill="#ececec" opacity="0.66"/>
<rect x="713.05" y="244.32" width="2.21" height="2.1" fill="#ececec" opacity="0.66"/>
<rect x="715.26" y="244.32" width="0.55" height="2.1" fill="#ececec" opacity="0.66"/>
<rect x="715.81" y="244.32" width="2.77" height="2.1" fill="#ececec" opacity="0.66"/>
<rect x="718.58" y="244.32" width="0.55" height="2.1" fill="#ececec" opacity="0.66"/>
<rect x="719.13" y="244.32" width="4.42" height="2.1" fill="#ececec" opacity="0.66"/>
<rect x="723.56" y="244.32" width="0.55" height="2.1" fill="#ececec" opacity="0.66"/>
<rect x="699.22" y="248.32" width="7.19" height="2.1" fill="#ececec" opacity="0.66"/>
<rect x="706.41" y="248.32" width="0.55" height="2.1" fill="#ececec" opacity="0.66"/>
<rect x="707.52" y="248.32" width="0.55" height="2.1" fill="#ececec" opacity="0.66"/>
<rect x="708.62" y="248.32" width="0.55" height="2.1" fill="#ececec" opacity="0.66"/>
<rect x="709.73" y="248.32" width="1.11" height="2.1" fill="#ececec" opacity="0.66"/>
<rect x="710.84" y="248.32" width="0.55" height="2.1" fill="#ececec" opacity="0.66"/>
<rect x="711.39" y="248.32" width="2.21" height="2.1" fill="#ececec" opacity="0.66"/>
<rect x="713.60" y="248.32" width="0.55" height="2.1" fill="#ececec" opacity="0.66"/>
<rect x="714.15" y="248.32" width="4.42" height="2.1" fill="#ececec" opacity="0.66"/>
<rect x="718.58" y="248.32" width="0.55" height="2.1" fill="#ececec" opacity="0.66"/>
<rect x="719.13" y="248.32" width="4.42" height="2.1" fill="#ececec" opacity="0.66"/>
<rect x="723.56" y="248.32" width="0.55" height="2.1" fill="#ececec" opacity="0.66"/>
<rect x="699.22" y="252.31" width="8.29" height="2.1" fill="#ececec" opacity="0.66"/>
<rect x="708.07" y="252.31" width="0.55" height="2.1" fill="#ececec" opacity="0.66"/>
<rect x="709.18" y="252.31" width="1.11" height="2.1" fill="#ececec" opacity="0.66"/>
<rect x="710.28" y="252.31" width="0.55" height="2.1" fill="#ececec" opacity="0.66"/>
<rect x="710.84" y="252.31" width="2.21" height="2.1" fill="#ececec" opacity="0.66"/>
<rect x="713.05" y="252.31" width="0.55" height="2.1" fill="#ececec" opacity="0.66"/>
<rect x="713.60" y="252.31" width="2.21" height="2.1" fill="#ececec" opacity="0.66"/>
<rect x="715.81" y="252.31" width="0.55" height="2.1" fill="#ececec" opacity="0.66"/>
<rect x="716.37" y="252.31" width="4.98" height="2.1" fill="#ececec" opacity="0.66"/>
<rect x="721.34" y="252.31" width="0.55" height="2.1" fill="#ececec" opacity="0.66"/>
<rect x="722.45" y="252.31" width="0.55" height="2.1" fill="#89bae2" opacity="0.6"/>
<rect x="723.00" y="252.31" width="0.55" height="2.1" fill="#e8b8a2" opacity="0.6"/>
<rect x="723.56" y="252.31" width="8.29" height="2.1" fill="#ececec" opacity="0.66"/>
<rect x="731.85" y="252.31" width="7.19" height="2.1" fill="#e8b8a2" opacity="0.6"/>
<rect x="739.04" y="252.31" width="0.55" height="2.1" fill="#ececec" opacity="0.66"/>
<rect x="699.22" y="260.29" width="2.77" height="2.1" fill="#89bae2" opacity="0.6"/>
<rect x="701.99" y="260.29" width="0.55" height="2.1" fill="#ececec" opacity="0.66"/>
<rect x="702.54" y="260.29" width="0.55" height="2.1" fill="#89bae2" opacity="0.6"/>
<rect x="703.09" y="260.29" width="3.87" height="2.1" fill="#e8b8a2" opacity="0.6"/>
<rect x="707.52" y="260.29" width="1.66" height="2.1" fill="#e8b8a2" opacity="0.6"/>
<rect x="709.73" y="260.29" width="9.40" height="2.1" fill="#ececec" opacity="0.66"/>
<rect x="719.13" y="260.29" width="0.55" height="2.1" fill="#e8b8a2" opacity="0.6"/>
<rect x="719.68" y="260.29" width="0.55" height="2.1" fill="#ececec" opacity="0.66"/>
<rect x="699.22" y="264.28" width="4.98" height="2.1" fill="#ececec" opacity="0.66"/>
<rect x="704.20" y="264.28" width="0.55" height="2.1" fill="#ececec" opacity="0.66"/>
<rect x="704.75" y="264.28" width="7.19" height="2.1" fill="#ececec" opacity="0.66"/>
<rect x="711.94" y="264.28" width="0.55" height="2.1" fill="#ececec" opacity="0.66"/>
<rect x="713.05" y="264.28" width="8.29" height="2.1" fill="#ececec" opacity="0.66"/>
<rect x="721.34" y="264.28" width="0.55" height="2.1" fill="#ececec" opacity="0.66"/>
<rect x="722.45" y="264.28" width="4.42" height="2.1" fill="#ececec" opacity="0.66"/>
<rect x="726.87" y="264.28" width="1.11" height="2.1" fill="#ececec" opacity="0.66"/>
<rect x="727.98" y="264.28" width="4.42" height="2.1" fill="#e8b8a2" opacity="0.6"/>
<rect x="732.40" y="264.28" width="0.55" height="2.1" fill="#ececec" opacity="0.66"/>
<rect x="733.51" y="264.28" width="2.21" height="2.1" fill="#e8b8a2" opacity="0.6"/>
<rect x="735.72" y="264.28" width="1.11" height="2.1" fill="#ececec" opacity="0.66"/>
<rect x="699.22" y="272.27" width="2.77" height="2.1" fill="#89bae2" opacity="0.6"/>
<rect x="701.99" y="272.27" width="0.55" height="2.1" fill="#ececec" opacity="0.66"/>
<rect x="702.54" y="272.27" width="7.19" height="2.1" fill="#e8b8a2" opacity="0.6"/>
<rect x="710.28" y="272.27" width="6.64" height="2.1" fill="#e8b8a2" opacity="0.6"/>
<rect x="716.92" y="272.27" width="0.55" height="2.1" fill="#ececec" opacity="0.66"/>
<rect x="697.01" y="280.25" width="3.32" height="2.1" fill="#89bae2" opacity="0.6"/>
<rect x="700.88" y="280.25" width="4.98" height="2.1" fill="#83d9c8" opacity="0.6"/>
<rect x="706.41" y="280.25" width="1.11" height="2.1" fill="#89bae2" opacity="0.6"/>
<rect x="708.07" y="280.25" width="0.55" height="2.1" fill="#ececec" opacity="0.66"/>
<rect x="708.62" y="280.25" width="0.55" height="2.1" fill="#ececec" opacity="0.66"/>
<rect x="699.22" y="284.24" width="2.77" height="2.1" fill="#89bae2" opacity="0.6"/>
<rect x="701.99" y="284.24" width="0.55" height="2.1" fill="#ececec" opacity="0.66"/>
<rect x="702.54" y="284.24" width="0.55" height="2.1" fill="#89bae2" opacity="0.6"/>
<rect x="703.09" y="284.24" width="2.77" height="2.1" fill="#e8b8a2" opacity="0.6"/>
<rect x="706.41" y="284.24" width="2.77" height="2.1" fill="#e8b8a2" opacity="0.6"/>
<rect x="709.73" y="284.24" width="4.98" height="2.1" fill="#e8b8a2" opacity="0.6"/>
<rect x="715.26" y="284.24" width="1.66" height="2.1" fill="#ececec" opacity="0.66"/>
<rect x="716.92" y="284.24" width="0.55" height="2.1" fill="#e8b8a2" opacity="0.6"/>
<rect x="717.47" y="284.24" width="0.55" height="2.1" fill="#ececec" opacity="0.66"/>
<rect x="699.22" y="288.24" width="2.77" height="2.1" fill="#89bae2" opacity="0.6"/>
<rect x="701.99" y="288.24" width="0.55" height="2.1" fill="#ececec" opacity="0.66"/>
<rect x="702.54" y="288.24" width="2.77" height="2.1" fill="#e8b8a2" opacity="0.6"/>
<rect x="705.86" y="288.24" width="2.21" height="2.1" fill="#e8b8a2" opacity="0.6"/>
<rect x="708.62" y="288.24" width="1.11" height="2.1" fill="#e8b8a2" opacity="0.6"/>
<rect x="710.28" y="288.24" width="0.55" height="2.1" fill="#e8b8a2" opacity="0.6"/>
<rect x="711.39" y="288.24" width="3.87" height="2.1" fill="#e8b8a2" opacity="0.6"/>
<rect x="715.81" y="288.24" width="2.77" height="2.1" fill="#e8b8a2" opacity="0.6"/>
<rect x="719.13" y="288.24" width="1.66" height="2.1" fill="#e8b8a2" opacity="0.6"/>
<rect x="721.34" y="288.24" width="1.66" height="2.1" fill="#e8b8a2" opacity="0.6"/>
<rect x="723.56" y="288.24" width="2.21" height="2.1" fill="#e8b8a2" opacity="0.6"/>
<rect x="726.32" y="288.24" width="1.11" height="2.1" fill="#e8b8a2" opacity="0.6"/>
<rect x="727.98" y="288.24" width="1.66" height="2.1" fill="#e8b8a2" opacity="0.6"/>
<rect x="730.19" y="288.24" width="2.21" height="2.1" fill="#e8b8a2" opacity="0.6"/>
<rect x="732.96" y="288.24" width="3.32" height="2.1" fill="#e8b8a2" opacity="0.6"/>
<rect x="736.83" y="288.24" width="2.21" height="2.1" fill="#e8b8a2" opacity="0.6"/>
<rect x="739.59" y="288.24" width="1.66" height="2.1" fill="#e8b8a2" opacity="0.6"/>
<rect x="741.80" y="288.24" width="4.42" height="2.1" fill="#e8b8a2" opacity="0.6"/>
<rect x="746.78" y="288.24" width="3.32" height="2.1" fill="#e8b8a2" opacity="0.6"/>
<rect x="750.10" y="288.24" width="0.55" height="2.1" fill="#ececec" opacity="0.66"/>
<rect x="694.80" y="296.22" width="0.55" height="2.1" fill="#89c180" opacity="0.6"/>
<rect x="695.91" y="296.22" width="1.66" height="2.1" fill="#89c180" opacity="0.6"/>
<rect x="698.12" y="296.22" width="3.32" height="2.1" fill="#89c180" opacity="0.6"/>
<rect x="701.99" y="296.22" width="4.98" height="2.1" fill="#89c180" opacity="0.6"/>
<rect x="707.52" y="296.22" width="1.66" height="2.1" fill="#89c180" opacity="0.6"/>
<rect x="694.80" y="300.21" width="1.11" height="2.1" fill="#89bae2" opacity="0.6"/>
<rect x="696.46" y="300.21" width="4.42" height="2.1" fill="#ececec" opacity="0.66"/>
<rect x="701.44" y="300.21" width="1.11" height="2.1" fill="#ececec" opacity="0.66"/>
<rect x="703.09" y="300.21" width="5.53" height="2.1" fill="#e8b8a2" opacity="0.6"/>
<rect x="708.62" y="300.21" width="0.55" height="2.1" fill="#ececec" opacity="0.66"/>
<rect x="697.01" y="304.20" width="6.08" height="2.1" fill="#ececec" opacity="0.66"/>
<rect x="703.65" y="304.20" width="0.55" height="2.1" fill="#ececec" opacity="0.66"/>
<rect x="704.75" y="304.20" width="5.53" height="2.1" fill="#e8b8a2" opacity="0.6"/>
<rect x="710.84" y="304.20" width="1.11" height="2.1" fill="#cacaca" opacity="0.6"/>
<rect x="712.50" y="304.20" width="1.66" height="2.1" fill="#ececec" opacity="0.66"/>
<rect x="714.15" y="304.20" width="0.55" height="2.1" fill="#ececec" opacity="0.66"/>
<rect x="714.71" y="304.20" width="2.21" height="2.1" fill="#ececec" opacity="0.66"/>
<rect x="697.01" y="308.20" width="2.21" height="2.1" fill="#ececec" opacity="0.66"/>
<rect x="699.78" y="308.20" width="0.55" height="2.1" fill="#ececec" opacity="0.66"/>
<rect x="700.88" y="308.20" width="0.55" height="2.1" fill="#ececec" opacity="0.66"/>
<rect x="701.44" y="308.20" width="1.66" height="2.1" fill="#ececec" opacity="0.66"/>
<rect x="703.65" y="308.20" width="1.66" height="2.1" fill="#89bae2" opacity="0.6"/>
<rect x="705.86" y="308.20" width="1.66" height="2.1" fill="#ececec" opacity="0.66"/>
<rect x="708.07" y="308.20" width="1.11" height="2.1" fill="#89bae2" opacity="0.6"/>
<rect x="709.73" y="308.20" width="1.66" height="2.1" fill="#ececec" opacity="0.66"/>
<rect x="711.39" y="308.20" width="0.55" height="2.1" fill="#ececec" opacity="0.66"/>
<rect x="711.94" y="308.20" width="2.21" height="2.1" fill="#ececec" opacity="0.66"/>
<rect x="714.71" y="308.20" width="1.11" height="2.1" fill="#89bae2" opacity="0.6"/>
<rect x="716.37" y="308.20" width="1.66" height="2.1" fill="#ececec" opacity="0.66"/>
<rect x="718.58" y="308.20" width="1.11" height="2.1" fill="#ececec" opacity="0.66"/>
<rect x="720.24" y="308.20" width="5.53" height="2.1" fill="#e8b8a2" opacity="0.6"/>
<rect x="725.77" y="308.20" width="0.55" height="2.1" fill="#ececec" opacity="0.66"/>
<rect x="697.01" y="316.18" width="1.11" height="2.1" fill="#89bae2" opacity="0.6"/>
<rect x="698.67" y="316.18" width="1.66" height="2.1" fill="#89bae2" opacity="0.6"/>
<rect x="700.33" y="316.18" width="0.55" height="2.1" fill="#ececec" opacity="0.66"/>
<rect x="700.88" y="316.18" width="2.21" height="2.1" fill="#ececec" opacity="0.66"/>
<rect x="703.09" y="316.18" width="0.55" height="2.1" fill="#ececec" opacity="0.66"/>
<rect x="704.20" y="316.18" width="0.55" height="2.1" fill="#ececec" opacity="0.66"/>
<rect x="705.31" y="316.18" width="0.55" height="2.1" fill="#cbddc2" opacity="0.6"/>
<rect x="705.86" y="316.18" width="0.55" height="2.1" fill="#ececec" opacity="0.66"/>
<rect x="699.22" y="320.17" width="2.77" height="2.1" fill="#89bae2" opacity="0.6"/>
<rect x="701.99" y="320.17" width="0.55" height="2.1" fill="#ececec" opacity="0.66"/>
<rect x="702.54" y="320.17" width="3.87" height="2.1" fill="#e8b8a2" opacity="0.6"/>
<rect x="706.97" y="320.17" width="3.32" height="2.1" fill="#e8b8a2" opacity="0.6"/>
<rect x="710.84" y="320.17" width="18.25" height="2.1" fill="#e8b8a2" opacity="0.6"/>
<rect x="729.64" y="320.17" width="5.53" height="2.1" fill="#e8b8a2" opacity="0.6"/>
<rect x="735.72" y="320.17" width="11.61" height="2.1" fill="#e8b8a2" opacity="0.6"/>
<rect x="747.33" y="320.17" width="0.55" height="2.1" fill="#ececec" opacity="0.66"/>
<rect x="697.01" y="324.16" width="2.21" height="2.1" fill="#89bae2" opacity="0.6"/>
<rect x="699.22" y="324.16" width="0.55" height="2.1" fill="#ececec" opacity="0.66"/>
<rect x="699.22" y="328.16" width="5.53" height="2.1" fill="#ececec" opacity="0.66"/>
<rect x="705.31" y="328.16" width="0.55" height="2.1" fill="#ececec" opacity="0.66"/>
<rect x="706.41" y="328.16" width="2.21" height="2.1" fill="#ececec" opacity="0.66"/>
<rect x="708.62" y="328.16" width="0.55" height="2.1" fill="#ececec" opacity="0.66"/>
<rect x="709.18" y="328.16" width="0.55" height="2.1" fill="#cbddc2" opacity="0.6"/>
<rect x="709.73" y="328.16" width="0.55" height="2.1" fill="#ececec" opacity="0.66"/>
<rect x="699.22" y="332.15" width="12.17" height="2.1" fill="#ececec" opacity="0.66"/>
<rect x="711.39" y="332.15" width="0.55" height="2.1" fill="#ececec" opacity="0.66"/>
<rect x="711.94" y="332.15" width="5.53" height="2.1" fill="#ececec" opacity="0.66"/>
<rect x="717.47" y="332.15" width="0.55" height="2.1" fill="#ececec" opacity="0.66"/>
<rect x="718.58" y="332.15" width="6.08" height="2.1" fill="#ececec" opacity="0.66"/>
<rect x="724.66" y="332.15" width="0.55" height="2.1" fill="#ececec" opacity="0.66"/>
<rect x="725.21" y="332.15" width="6.08" height="2.1" fill="#ececec" opacity="0.66"/>
<rect x="731.30" y="332.15" width="0.55" height="2.1" fill="#ececec" opacity="0.66"/>
</svg>
<div class="abs" style="left:678.5px;top:56px;width:74.8px;height:1.9px;background:#f6f6f6"></div>

<div id="status" class="abs"></div>
<div id="zoombox" class="abs"></div>
<div class="abs tx" style="left:2.4px;top:628.05px;font-size:11.4px;font-weight:normal;color:#ffffff;transform:scaleX(0.9077);">50 %</div>
<svg class="abs" style="left:48px;top:629.7px" width="12" height="17" viewBox="48 629.7 12 17"><path d="M51.4 637 H57.1 L54.25 640.2 Z" fill="#e0e0e0"/></svg>
<svg class="abs" style="left:82px;top:630px" width="15" height="15" viewBox="82 630 15 15"><circle cx="89.4" cy="637.5" r="5.6" fill="#7fd884"/><path d="M86.6 637.6 L88.6 639.6 L92.3 635.6" fill="none" stroke="#1e1e1e" stroke-width="1.3"/></svg>
<div class="abs tx" style="left:99.66px;top:627.95px;font-size:11.4px;font-weight:normal;color:#ffffff;transform:scaleX(1.0412);">No issues found</div>
<svg class="abs" style="left:256px;top:629.7px" width="12" height="17" viewBox="256 629.7 12 17"><path d="M265 633.3 V642.1 L260 637.7 Z" fill="#999"/></svg>
<svg class="abs" style="left:550px;top:629.7px" width="12" height="17" viewBox="550 629.7 12 17"><path d="M553 633 V642 L558.1 637.5 Z" fill="#999"/></svg>
<div class="abs tx" style="left:585.68px;top:627.95px;font-size:11.4px;font-weight:normal;color:#ffffff;transform:scaleX(0.9208);">Ln: 1</div>
<div class="abs tx" style="left:628.5px;top:627.95px;font-size:11.4px;font-weight:normal;color:#ffffff;transform:scaleX(0.9118);">Ch: 36</div>
<div class="abs" style="left:254px;top:629.8px;width:310px;height:15.2px;background:#2e2e2e"></div>
<div class="abs" style="left:669px;top:629.8px;width:85.1px;height:15.4px;background:#3c3c3e"></div>
<div class="abs box" style="left:670px;width:36.5px;"></div>
<div class="abs box" style="left:709.4px;width:42.7px;"></div>
<div class="abs tx" style="left:679.5px;top:627.95px;font-size:11.4px;font-weight:normal;color:#ffffff;transform:scaleX(0.813);">SPC</div>
<div class="abs tx" style="left:718.6px;top:627.95px;font-size:11.4px;font-weight:normal;color:#ffffff;transform:scaleX(0.8233);">CRLF</div>
<div class="abs" style="left:754.1px;top:16px;width:2.9px;height:631px;background:#1f1f1f"></div>
</body>
</html>
